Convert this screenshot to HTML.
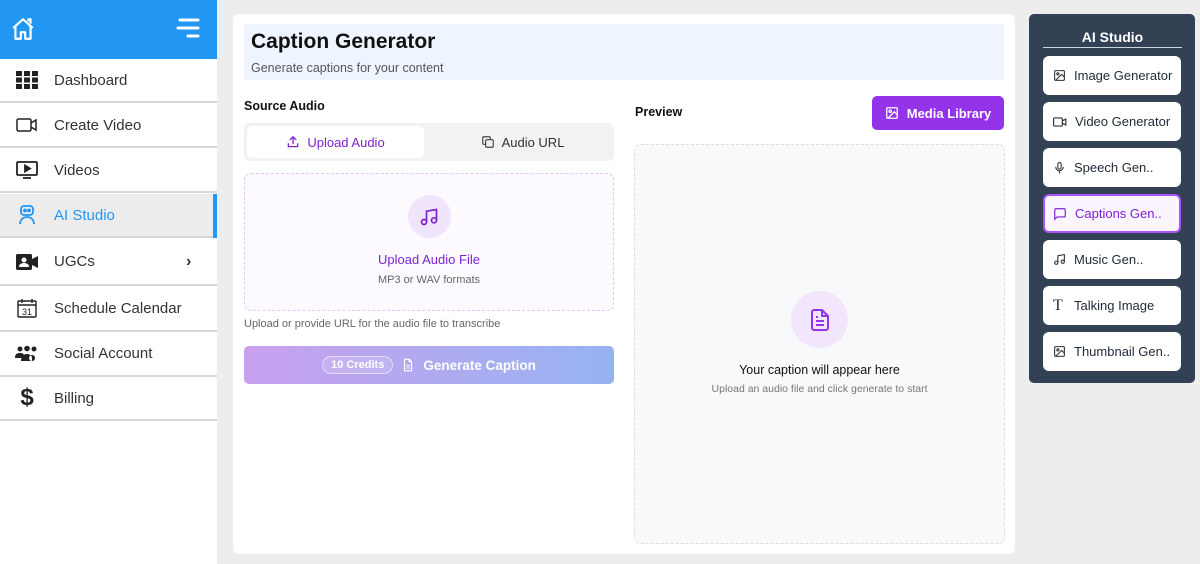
<!DOCTYPE html>
<html><head><meta charset="utf-8"><style>
*{box-sizing:border-box;margin:0;padding:0}
body{width:1200px;height:564px;background:#ededed;font-family:"Liberation Sans",sans-serif;position:relative;overflow:hidden;color:#222}
.sb{position:absolute;left:0;top:0;width:217px;height:564px;background:#fff}
.hd{height:59px;background:#2196f3;position:relative}
.row{position:absolute;left:0;width:217px;height:44px;border-bottom:2px solid #d6d6d6;display:flex;align-items:center;font-size:15px;color:#333}
.row .ic{width:54px;display:flex;justify-content:center;padding-left:0}
.row.act{background:#ececec;color:#2196f3}
.main{position:absolute;left:233px;top:14px;width:782px;height:540px;background:#fff;border-radius:6px}
.ttl{position:absolute;left:11px;top:10px;width:760px;height:56px;background:#eef5ff}
.ttl h1{position:absolute;left:7px;top:6px;font-size:21px;font-weight:bold;color:#111}
.ttl p{position:absolute;left:7px;top:37px;font-size:12.5px;color:#555}
.lbl{position:absolute;font-size:12.5px;font-weight:bold;color:#111}
.tabs{position:absolute;left:11px;top:109px;width:370px;height:38px;background:#f1f2f4;border-radius:6px}
.tab{position:absolute;top:3px;height:32px;width:177px;display:flex;align-items:center;justify-content:center;gap:7px;font-size:13px}
.drop{position:absolute;left:11px;top:159px;width:370px;height:138px;border:1.5px dashed #e2c9f7;background:#fdfaff;border-radius:7px;text-align:center}
.gen{position:absolute;left:11px;top:332px;width:370px;height:38px;border-radius:5px;background:linear-gradient(90deg,#c9a0ef,#96b3f0);display:flex;align-items:center;justify-content:center;color:#fff;font-weight:bold;font-size:13.5px;gap:8px}
.pv{position:absolute;left:401px;top:130px;width:371px;height:400px;border:1.5px dashed #dcdde0;background:#f8f9fa;border-radius:7px;text-align:center}
.ml{position:absolute;left:639px;top:82px;width:132px;height:34px;background:#9333ea;border-radius:5px;color:#fff;font-weight:bold;font-size:13px;display:flex;align-items:center;justify-content:center;gap:8px}
.rp{position:absolute;left:1029px;top:14px;width:166px;height:369px;background:#334155;border-radius:5px}
.rp h3{position:absolute;left:14px;top:15px;width:139px;text-align:center;color:#fff;font-size:14px;border-bottom:1px solid #cbd5e1;padding-bottom:2px}
.it{position:absolute;left:14px;width:138px;height:39px;background:#fff;border-radius:6px;display:flex;align-items:center;font-size:13px;color:#1f2937;padding-left:10px;gap:8px}
.it.on{background:#faf5ff;border:2px solid #a855f7;color:#7e22ce;padding-left:8px}
</style></head><body>
<div class="sb">
 <div class="hd">
  <svg style="position:absolute;left:10px;top:16px" width="26" height="26" viewBox="0 0 24 24" fill="none" stroke="#fff" stroke-width="2" stroke-linejoin="round"><path d="M3 11 12 3l9 8M5 9.5V21h5v-6h4v6h5V9.5M17 5V3h2v4"/></svg>
  <svg style="position:absolute;left:176px;top:18px" width="24" height="20" viewBox="0 0 24 20" stroke="#fff" stroke-width="3" stroke-linecap="round"><path d="M4 2h18M2 10h20M12 18h10"/></svg>
 </div>
 <div class="row" style="top:59px"><span class="ic"><svg width="22" height="18" viewBox="0 0 22 18" fill="#222"><rect x="0" y="0" width="6" height="5"/><rect x="8" y="0" width="6" height="5"/><rect x="16" y="0" width="6" height="5"/><rect x="0" y="6.5" width="6" height="5"/><rect x="8" y="6.5" width="6" height="5"/><rect x="16" y="6.5" width="6" height="5"/><rect x="0" y="13" width="6" height="5"/><rect x="8" y="13" width="6" height="5"/><rect x="16" y="13" width="6" height="5"/></svg></span>Dashboard</div>
 <div class="row" style="top:104px"><span class="ic"><svg width="22" height="14" viewBox="0 0 22 14" fill="none" stroke="#222" stroke-width="1.5"><rect x="1" y="1" width="14" height="12" rx="1.5"/><path d="M15 5l5-3v10l-5-3"/></svg></span>Create Video</div>
 <div class="row" style="top:149px"><span class="ic"><svg width="22" height="18" viewBox="0 0 22 18" fill="none" stroke="#222" stroke-width="1.8"><rect x="1" y="1" width="20" height="13" rx="1"/><path d="M7 17h8"/><path d="M9 4.5v6l5-3z" fill="#222"/></svg></span>Videos</div>
 <div class="row act" style="top:194px"><span class="ic"><svg width="18" height="20" viewBox="0 0 18 20" fill="none" stroke="#2196f3" stroke-width="1.8"><rect x="3" y="1" width="12" height="9" rx="3"/><circle cx="7" cy="5.5" r="1" fill="#2196f3"/><circle cx="11" cy="5.5" r="1" fill="#2196f3"/><path d="M2 19c0-4 3-7 7-7s7 3 7 7"/></svg></span>AI Studio<div style="position:absolute;right:0;top:0;width:4px;height:44px;background:#2196f3"></div></div>
 <div class="row" style="top:239px;height:47px"><span class="ic"><svg width="22" height="16" viewBox="0 0 22 16" fill="#222"><rect x="0" y="0" width="16" height="16" rx="1.5"/><path d="M16 5l6-3v12l-6-3z"/><circle cx="8" cy="6" r="2.5" fill="#fff"/><path d="M3 13c0-3 2.5-4 5-4s5 1 5 4z" fill="#fff"/></svg></span>UGCs<span style="position:absolute;left:186px;font-size:16px;font-weight:bold">›</span></div>
 <div class="row" style="top:286px;height:46px"><span class="ic"><svg width="20" height="20" viewBox="0 0 20 20" fill="none" stroke="#222" stroke-width="1.4"><rect x="1" y="3" width="18" height="16" rx="1"/><path d="M1 7h18M5 1v4M15 1v4"/><text x="10" y="17" font-size="9" text-anchor="middle" fill="#222" stroke="none" font-family="Liberation Sans">31</text></svg></span>Schedule Calendar</div>
 <div class="row" style="top:332px;height:45px"><span class="ic"><svg width="24" height="18" viewBox="0 0 24 18" fill="#222"><circle cx="5" cy="4" r="2.5"/><circle cx="12" cy="3.5" r="2.8"/><circle cx="19" cy="4" r="2.5"/><path d="M0 13c0-4 2-5 5-5s4 1 4 3v2zM6 16c0-5 3-7 6-7s5 2 5 4v3zM17 10a3 3 0 1 0 .1 0z"/></svg></span>Social Account</div>
 <div class="row" style="top:377px"><span class="ic" style="font-size:24px;font-weight:bold;color:#222">$</span>Billing</div>
</div>

<div class="main">
 <div class="ttl"><h1>Caption Generator</h1><p>Generate captions for your content</p></div>
 <div class="lbl" style="left:11px;top:85px">Source Audio</div>
 <div class="lbl" style="left:402px;top:91px">Preview</div>
 <div class="tabs">
  <div class="tab" style="left:3px;background:#fff;border-radius:5px;color:#7e22ce"><svg width="14" height="14" viewBox="0 0 24 24" fill="none" stroke="#7e22ce" stroke-width="2.2" stroke-linecap="round"><path d="M4 15v5h16v-5M12 15V3M7 8l5-5 5 5"/></svg>Upload Audio</div>
  <div class="tab" style="left:190px;color:#333"><svg width="14" height="14" viewBox="0 0 24 24" fill="none" stroke="#444" stroke-width="2"><rect x="8" y="8" width="13" height="13" rx="2"/><path d="M16 8V5a2 2 0 0 0-2-2H5a2 2 0 0 0-2 2v9a2 2 0 0 0 2 2h3"/></svg>Audio URL</div>
 </div>
 <div class="drop">
  <div style="width:43px;height:43px;border-radius:50%;background:#f1e4fd;margin:21px auto 0;display:flex;align-items:center;justify-content:center"><svg width="20" height="20" viewBox="0 0 24 24" fill="none" stroke="#7e22ce" stroke-width="2"><path d="M9 18V5l12-2v13"/><circle cx="6" cy="18" r="3"/><circle cx="18" cy="16" r="3"/></svg></div>
  <div style="margin-top:14px;color:#7e22ce;font-size:13px">Upload Audio File</div>
  <div style="margin-top:7px;color:#666;font-size:11px">MP3 or WAV formats</div>
 </div>
 <div style="position:absolute;left:11px;top:304px;font-size:11px;color:#666">Upload or provide URL for the audio file to transcribe</div>
 <div class="gen"><span style="border:1px solid rgba(255,255,255,.5);background:rgba(255,255,255,.15);border-radius:10px;padding:2px 8px;font-size:11px">10 Credits</span><svg width="14" height="16" viewBox="0 0 24 24" fill="none" stroke="#fff" stroke-width="2"><path d="M14 2H6v20h12V6zM14 2v4h4M9 13h6M9 17h6"/></svg>Generate Caption</div>
 <div class="ml"><svg width="14" height="14" viewBox="0 0 24 24" fill="none" stroke="#fff" stroke-width="2.2"><rect x="3" y="3" width="18" height="18" rx="2"/><circle cx="9" cy="9" r="2"/><path d="M21 15l-5-5L5 21"/></svg>Media Library</div>
 <div class="pv">
  <div style="width:57px;height:57px;border-radius:50%;background:#f2e6fd;margin:146px auto 0;display:flex;align-items:center;justify-content:center"><svg width="24" height="26" viewBox="0 0 24 24" fill="none" stroke="#9333ea" stroke-width="2" stroke-linejoin="round"><path d="M14 2H6a2 2 0 0 0-2 2v16a2 2 0 0 0 2 2h12a2 2 0 0 0 2-2V8zM14 2v6h6M8 9h2M8 13h8M8 17h8"/></svg></div>
  <div style="margin-top:15px;font-size:12.5px;color:#111">Your caption will appear here</div>
  <div style="margin-top:6px;font-size:10.5px;color:#777">Upload an audio file and click generate to start</div>
 </div>
</div>

<div class="rp">
 <h3>AI Studio</h3>
 <div class="it" style="top:42px"><svg width="13" height="13" viewBox="0 0 24 24" fill="none" stroke="#333" stroke-width="2"><rect x="3" y="3" width="18" height="18" rx="2"/><circle cx="9" cy="9" r="2"/><path d="M21 15l-5-5L5 21"/></svg>Image Generator</div>
 <div class="it" style="top:88px"><svg width="14" height="12" viewBox="0 0 24 20" fill="none" stroke="#333" stroke-width="2"><rect x="1" y="3" width="15" height="14" rx="2"/><path d="M16 8l6-3v10l-6-3"/></svg>Video Generator</div>
 <div class="it" style="top:134px"><svg width="13" height="14" viewBox="0 0 24 24" fill="none" stroke="#333" stroke-width="2"><rect x="9" y="2" width="6" height="12" rx="3"/><path d="M5 10a7 7 0 0 0 14 0M12 17v5"/></svg>Speech Gen..</div>
 <div class="it on" style="top:180px"><svg width="14" height="14" viewBox="0 0 24 24" fill="none" stroke="#7e22ce" stroke-width="2"><path d="M21 15a2 2 0 0 1-2 2H7l-4 4V5a2 2 0 0 1 2-2h14a2 2 0 0 1 2 2z"/></svg>Captions Gen..</div>
 <div class="it" style="top:226px"><svg width="13" height="13" viewBox="0 0 24 24" fill="none" stroke="#333" stroke-width="2"><path d="M9 18V5l12-2v13"/><circle cx="6" cy="18" r="3"/><circle cx="18" cy="16" r="3"/></svg>Music Gen..</div>
 <div class="it" style="top:272px"><span style="font-family:'Liberation Serif',serif;font-size:16px;width:13px">T</span>Talking Image</div>
 <div class="it" style="top:318px"><svg width="13" height="13" viewBox="0 0 24 24" fill="none" stroke="#333" stroke-width="2"><rect x="3" y="3" width="18" height="18" rx="2"/><circle cx="9" cy="9" r="2"/><path d="M21 15l-5-5L5 21"/></svg>Thumbnail Gen..</div>
</div>
</body></html>
